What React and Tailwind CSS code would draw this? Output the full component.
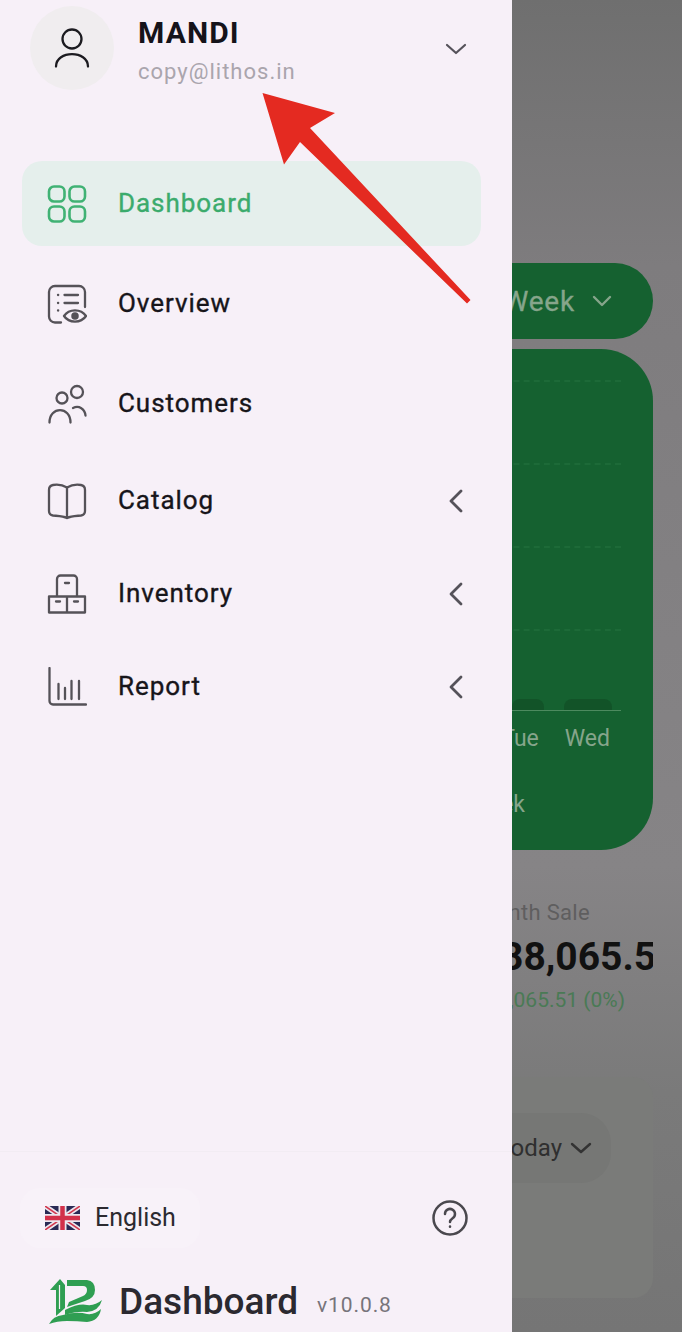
import React from "react";

const stroke = { fill: "none", stroke: "#555258", strokeWidth: 2.3, strokeLinecap: "round", strokeLinejoin: "round" };

const Icon = ({ children, style = stroke }) => (
  <svg width="40" height="40" viewBox="0 0 40 40" className="shrink-0" {...style}>{children}</svg>
);

const DashIcon = () => (
  <Icon style={{ ...stroke, stroke: "#40b274", strokeWidth: 2.6 }}>
    <rect x="2" y="2.500" width="15.500" height="15" rx="5" />
    <rect x="22.500" y="2.500" width="15.500" height="15" rx="5" />
    <rect x="2" y="22.500" width="15.500" height="15" rx="5" />
    <rect x="22.500" y="22.500" width="15.500" height="15" rx="5" />
  </Icon>
);
const OverviewIcon = () => (
  <Icon>
    <path d="M14 38.500H8a6 6 0 0 1-6-6V8a6 6 0 0 1 6-6h24a6 6 0 0 1 6 6v15" />
    <path d="M11 11h.2M11 19h.2M11 26.500h.2M17.500 11H31M17.500 19H31" />
    <path d="M17 32c5-7.500 17-7.500 22 0-5 7.500-17 7.500-22 0z" />
    <circle cx="28" cy="32" r="2.600" fill="#555258" />
  </Icon>
);
const CustomersIcon = () => (
  <Icon>
    <circle cx="15" cy="14" r="5.500" />
    <circle cx="30" cy="8" r="6" />
    <path d="M2.500 38.500C2.500 22 23.500 22 23.500 38.500" />
    <path d="M26 24c6-3 12 1 12.500 7.500" />
  </Icon>
);
const CatalogIcon = () => (
  <Icon>
    <path d="M20 6.500C15 3.500 9 3.500 6 4 3 4.500 2 6 2 9v21c0 3 1 4 4 4.500 5 .5 10 .5 14 2.500 4-2 9-2 14-2.500 3-.5 4-1.500 4-4.500V9c0-3-1-4.500-4-5-3-.5-9-.500-14 2.500z" />
    <path d="M20 6.500V37" />
  </Icon>
);
const InventoryIcon = () => (
  <Icon>
    <path d="M10 22V5a3.500 3.500 0 0 1 3.500-3.500h13A3.500 3.500 0 0 1 30 5v17" />
    <path d="M2 22.500h36V38.500H2zM20 22.500v16" />
    <path d="M18 9h4M9 27.500h4M27 27.500h4" />
  </Icon>
);
const ReportIcon = () => (
  <Icon>
    <path d="M2.500 1v33a3.500 3.500 0 0 0 3.500 3.500h33" />
    <path d="M11.500 17v15M18 21v11M24.500 14v18M32 14v18" />
  </Icon>
);

const ChevronLeft = () => (
  <svg width="16" height="24" viewBox="0 0 16 24" className="shrink-0" fill="none" stroke="#55525a" strokeWidth="2.800" strokeLinecap="round" strokeLinejoin="round">
    <path d="M13 2 3 12l10 10" />
  </svg>
);

const Row = ({ icon, label, chevron, className }) => (
  <div className={`ml-[22px] mr-[31px] flex h-[85px] items-center pl-[25px] pr-[17px] ${className}`}>
    {icon}
    <span className="ml-[31px] flex-1 text-[26px] tracking-[0.95px] text-[#17151a] [-webkit-text-stroke:0.35px_#17151a]">{label}</span>
    {chevron && <ChevronLeft />}
  </div>
);

const Flag = () => (
  <svg width="35" height="24" viewBox="0 0 35 24" className="shrink-0">
    <rect width="35" height="24" fill="#2a2a55" />
    <path d="M0 0 35 24M35 0 0 24" stroke="#ece6ee" strokeWidth="5" />
    <path d="M0 0 35 24M35 0 0 24" stroke="#d2384f" strokeWidth="1.500" />
    <path d="M17.500 0v24M0 12h35" stroke="#ece6ee" strokeWidth="8" />
    <path d="M17.500 0v24M0 12h35" stroke="#d2304a" strokeWidth="4.500" />
  </svg>
);

const Logo = () => (
  <svg width="54" height="46" viewBox="0 0 54 46" className="shrink-0" fill="#2f9e52">
    <path d="M1 11 11 0l5 6v23l-9 8V11z" />
    <path d="M10.500 6v24" stroke="#f7f0f8" strokeWidth="1.200" fill="none" />
    <path d="M18 1h20q8 1 8 10 0 8-10 11l-12 4-6 2 2-5 14-6q4-2 4-6t-4-4H18z" />
    <path d="M16 31q14-7 22-5 8 1 15-5-3 11-15 12-10-1-22 3z" />
    <path d="M0 45q4-8 14-9 14-4 24-1 8 1 14-5-2 12-14 13-10-1-20-1-10 0-18 3z" />
  </svg>
);

export default function App() {
  return (
    <div className="relative flex h-[1332px] w-[682px] overflow-hidden font-['Roboto','Liberation_Sans',sans-serif]">
      {/* drawer */}
      <aside className="flex h-full w-[512px] shrink-0 flex-col bg-[#f7f0f8]">
        <header className="flex h-[161px] items-start pl-[30px] pr-[45px] pt-[6px]">
          <div className="flex h-[84px] w-[84px] shrink-0 items-center justify-center rounded-full bg-[#f0edef]">
            <svg width="36" height="40" viewBox="0 0 36 40" fill="none" stroke="#1c1b20" strokeWidth="2.300" strokeLinecap="round">
              <circle cx="18" cy="11" r="9.500" />
              <path d="M2 38.500C2 22 34 22 34 38.500" />
            </svg>
          </div>
          <div className="ml-[24px] flex-1">
            <div className="mt-[9px] text-[30px] font-bold leading-[36px] tracking-[1.1px] text-[#15131a]">MANDI</div>
            <div className="mt-[8px] text-[22px] leading-[26px] tracking-[1px] text-[#aaa5ad]">copy@lithos.in</div>
          </div>
          <svg width="22" height="14" viewBox="0 0 22 14" className="mt-[36px]" fill="none" stroke="#55525a" strokeWidth="2.200" strokeLinecap="round" strokeLinejoin="round">
            <path d="M2 3l9 8 9-8" />
          </svg>
        </header>

        <nav className="flex flex-col">
          <div className="ml-[22px] mr-[31px] flex h-[85px] items-center rounded-[20px] bg-[#e5efec] pl-[25px]">
            <DashIcon />
            <span className="ml-[31px] text-[26px] tracking-[0.95px] text-[#3bab6c] [-webkit-text-stroke:0.35px_#3bab6c]">Dashboard</span>
          </div>
          <Row className="mt-[15px]" icon={<OverviewIcon />} label="Overview" />
          <Row className="mt-[15px]" icon={<CustomersIcon />} label="Customers" />
          <Row className="mt-[12px]" icon={<CatalogIcon />} label="Catalog" chevron />
          <Row className="mt-[8px]" icon={<InventoryIcon />} label="Inventory" chevron />
          <Row className="mt-[8px]" icon={<ReportIcon />} label="Report" chevron />
        </nav>

        <footer className="mt-auto border-t border-[#f2ecf3] pl-[20px] pr-[44px]">
          <div className="mt-[36px] flex items-center justify-between">
            <div className="flex h-[60px] w-[180px] items-center rounded-[20px] bg-[#f8f2f9] pl-[25px]">
              <Flag />
              <span className="ml-[15px] text-[25px] text-[#2c2a30]">English</span>
            </div>
            <svg width="36" height="36" viewBox="0 0 36 36" fill="none" stroke="#4a484e" strokeWidth="2.500" strokeLinecap="round" strokeLinejoin="round">
              <circle cx="18" cy="18" r="16.500" />
              <path d="M13 14a5 5 0 1 1 7.600 4.200C19 19.300 18 20 18 22" />
              <path d="M18 26.500v.2" />
            </svg>
          </div>
          <div className="mb-[7px] mt-[30px] flex items-center pl-[29px]">
            <Logo />
            <span className="ml-[16px] pt-[1px] text-[37px] font-medium leading-[46px] text-[#2b2930]">Dashboard</span>
            <span className="ml-[19px] mt-[8px] text-[21px] tracking-[0.9px] text-[#77747b]">v10.0.8</span>
          </div>
        </footer>
      </aside>

      {/* dimmed page behind the drawer */}
      <main className="flex h-full w-[170px] flex-col items-end overflow-hidden bg-[linear-gradient(#6f6f6f,#7e7c7e_20%,#868486_65%,#7a7a7a_82%,#757575)] pr-[29px] pt-[263px]">
        <div className="flex h-[76px] w-[170px] shrink-0 items-center justify-end rounded-r-full bg-[#156130] pr-[41px] text-[#86a58b]">
          <span className="whitespace-nowrap pt-[2px] text-[28px] tracking-[0.8px] [-webkit-text-stroke:0.3px_#86a58b]">Week</span>
          <svg width="20" height="14" viewBox="0 0 20 14" className="ml-[17px]" fill="none" stroke="currentColor" strokeWidth="2.400" strokeLinecap="round" strokeLinejoin="round">
            <path d="M2 3l8 8 8-8" />
          </svg>
        </div>

        <div className="mt-[10px] flex h-[501px] w-[170px] shrink-0 flex-col rounded-r-[52px] bg-[#156130] pt-[31px]">
          <div className="flex w-[138px] flex-col gap-[81px] self-start">
            <div className="border-t-2 border-dashed border-[#1d6a38]" />
            <div className="border-t-2 border-dashed border-[#1d6a38]" />
            <div className="border-t-2 border-dashed border-[#1d6a38]" />
            <div className="border-t-2 border-dashed border-[#1d6a38]" />
          </div>
          <div className="mt-[68px] flex h-[12px] w-[138px] items-end gap-[20px] border-b border-[#4d8a5f] pl-[29px]">
            <div className="h-[11px] w-[32px] rounded-t-[8px] bg-[#125328]" />
            <div className="h-[11px] w-[48px] rounded-t-[8px] bg-[#125328]" />
          </div>
          <div className="mt-[14px] flex w-[138px] items-center justify-end gap-[26px] whitespace-nowrap pr-[11px] text-[23px] leading-[28px] text-[#86a58b]">
            <span>Tue</span>
            <span>Wed</span>
          </div>
          <div className="mt-[38px] flex w-[42px] justify-end whitespace-nowrap text-[23px] leading-[28px] text-[#86a58b]">Week</div>
        </div>

        <div className="mt-[49px] whitespace-nowrap pr-[63px] text-[22px] leading-[28px] tracking-[0.3px] text-[#5f5e5f]">Month Sale</div>
        <div className="mt-[7px] flex h-[46px] w-[141px] shrink-0 items-center overflow-hidden">
          <span className="ml-[-11px] whitespace-nowrap text-[39px] font-bold text-[#111111]">88,065.51</span>
        </div>
        <div className="mr-[28px] mt-[6px] whitespace-nowrap text-[21px] leading-[28px] text-[#4a7a55]">88,065.51 (0%)</div>

        <div className="mt-[63px] flex h-[221px] w-[170px] shrink-0 flex-col rounded-r-[20px] bg-[#7a7b79] pt-[36px]">
          <div className="flex h-[70px] w-[128px] items-center justify-end rounded-r-[30px] bg-[#767775] pr-[19px]">
            <span className="whitespace-nowrap text-[24px] text-[#2f2f2f]">Today</span>
            <svg width="22" height="14" viewBox="0 0 22 14" className="ml-[8px]" fill="none" stroke="#333333" strokeWidth="2.400" strokeLinecap="round" strokeLinejoin="round">
              <path d="M2 3l9 8 9-8" />
            </svg>
          </div>
        </div>
      </main>

      {/* annotation arrow */}
      <svg className="absolute left-[255px] top-[88px]" width="220" height="220" viewBox="255 88 220 220">
        <path d="M262.500 93 335 113 310 128 470.500 300 467 303.500 300 142 284 164.500Z" fill="#e42a21" />
      </svg>
    </div>
  );
}
